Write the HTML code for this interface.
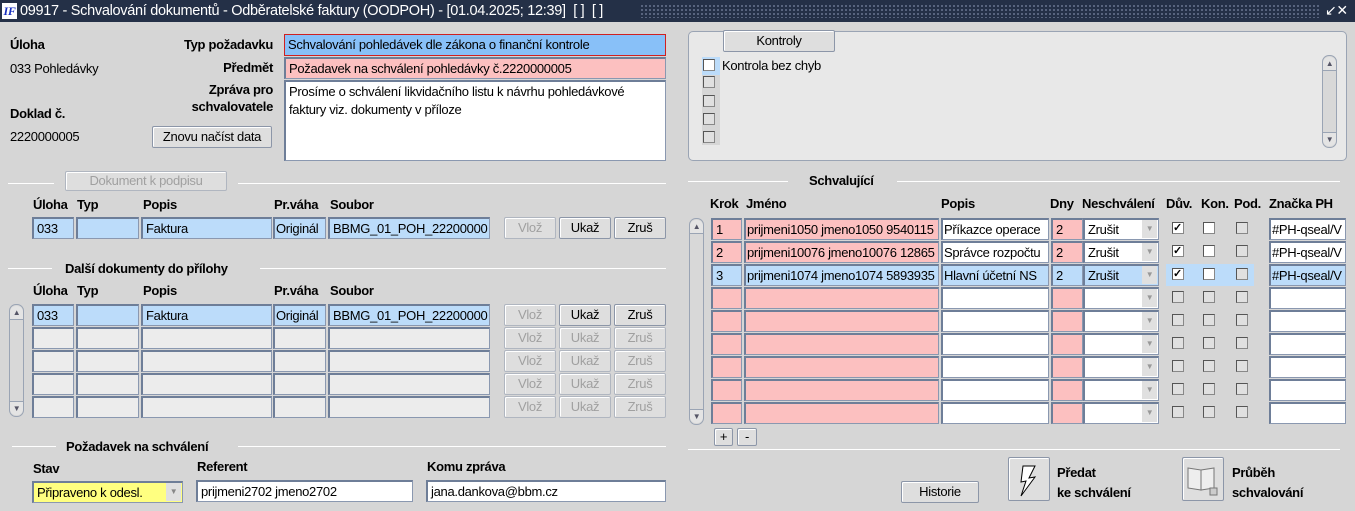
<!DOCTYPE html>
<html><head><meta charset="utf-8"><style>
*{box-sizing:border-box;margin:0;padding:0}
body{width:1355px;height:511px;background:#d6d6d6;font-family:"Liberation Sans",sans-serif;font-size:13px;color:#000;position:relative;overflow:hidden;letter-spacing:-0.3px}
.a{position:absolute;white-space:nowrap}
.b{font-weight:bold}
.f{position:absolute;border:1px solid #8a98b0;border-top:2px solid #6e7e98;border-left:2px solid #6e7e98;padding:1px 3px;line-height:17px;white-space:nowrap;overflow:hidden;height:22px}
.bl{background:#bcdcfa}.pk{background:#fcc0c0}.wh{background:#fff}.gr{background:#ececec}
.btn{position:absolute;border:1px solid #8c96a8;background:#dedede;text-align:center;line-height:19px;height:22px;border-radius:2px;box-shadow:inset 1px 1px 0 #fff}
.dis{color:#a0a0a0;border-color:#b0b6c0}
.hl{position:absolute;height:1px;background:#888;border-bottom:1px solid #fff}
.cb{position:absolute;width:12px;height:12px;border:1px solid #888;border-top-color:#555;border-left-color:#555;background:#e0e0e0}
.sb{position:absolute;width:15px;border:1px solid #9aa4b4;border-radius:7px;background:#d8d8d8;font-size:8px;color:#556;text-align:center}
.sb .u{position:absolute;top:1px;left:0;width:13px;height:14px;border-bottom:1px solid #9aa4b4;background:#e4e4e4;border-radius:6px 6px 0 0;line-height:14px}
.sb .d{position:absolute;bottom:1px;left:0;width:13px;height:14px;border-top:1px solid #9aa4b4;background:#e4e4e4;border-radius:0 0 6px 6px;line-height:14px}
</style></head><body>
<div class="a" style="left:0;top:0;width:1355px;height:22px;background:#243047;color:#fff;font-size:14.5px;line-height:22px;padding-left:20px">09917 - Schvalování dokumentů - Odběratelské faktury (OODPOH) - [01.04.2025; 12:39]&nbsp; [ ]&nbsp; [ ]</div>
<div class="a" style="left:2px;top:3px;width:15px;height:16px;background:#fff;color:#1830c0;font:bold italic 12px 'Liberation Serif';line-height:16px;text-align:center">IF</div>
<div class="a" style="left:640px;top:4px;width:680px;height:14px;background-image:radial-gradient(#6a7690 0.8px,transparent 1px);background-size:4px 4px"></div>
<div class="a" style="left:1325px;top:2px;color:#fff;font-size:14px">↙✕</div>

<div class="a b" style="left:10px;top:37px">Úloha</div>
<div class="a" style="left:10px;top:61px">033 Pohledávky</div>
<div class="a b" style="left:10px;top:106px">Doklad č.</div>
<div class="a" style="left:10px;top:129px">2220000005</div>
<div class="a b" style="left:120px;top:37px;width:153px;text-align:right">Typ požadavku</div>
<div class="a b" style="left:120px;top:60px;width:153px;text-align:right">Předmět</div>
<div class="a b" style="left:120px;top:81px;width:153px;text-align:right;line-height:17px">Zpráva pro<br>schvalovatele</div>
<div class="f" style="left:284px;top:34px;width:382px;background:#88c0f8;border:1px solid #d02020">Schvalování pohledávek dle zákona o finanční kontrole</div>
<div class="f pk" style="left:284px;top:57px;width:382px">Požadavek na schválení pohledávky č.2220000005</div>
<div class="f wh" style="left:284px;top:80px;width:382px;height:81px;white-space:normal;line-height:18px">Prosíme o schválení likvidačního listu k návrhu pohledávkové faktury viz. dokumenty v příloze</div>
<div class="btn" style="left:152px;top:126px;width:120px">Znovu načíst data</div>

<div class="hl" style="left:8px;top:183px;width:46px"></div>
<div class="btn dis" style="left:65px;top:171px;width:162px;height:20px;line-height:17px">Dokument k podpisu</div>
<div class="hl" style="left:238px;top:183px;width:428px"></div>
<div class="a b" style="left:33px;top:197px">Úloha</div><div class="a b" style="left:77px;top:197px">Typ</div><div class="a b" style="left:143px;top:197px">Popis</div><div class="a b" style="left:274px;top:197px">Pr.váha</div><div class="a b" style="left:330px;top:197px">Soubor</div>
<div class="f bl" style="left:32px;top:217px;width:42px">033</div><div class="f bl" style="left:76px;top:217px;width:63px"></div><div class="f bl" style="left:141px;top:217px;width:131px">Faktura</div><div class="f bl" style="left:273px;top:217px;width:53px;padding:1px 1px">Originál</div><div class="f bl" style="left:328px;top:217px;width:162px">BBMG_01_POH_22200000</div>
<div class="btn dis" style="left:504px;top:217px;width:52px">Vlož</div><div class="btn" style="left:559px;top:217px;width:52px">Ukaž</div><div class="btn" style="left:614px;top:217px;width:52px">Zruš</div>

<div class="hl" style="left:8px;top:268px;width:44px"></div>
<div class="a b" style="left:65px;top:261px">Další dokumenty do přílohy</div>
<div class="hl" style="left:260px;top:268px;width:406px"></div>
<div class="a b" style="left:33px;top:283px">Úloha</div><div class="a b" style="left:77px;top:283px">Typ</div><div class="a b" style="left:143px;top:283px">Popis</div><div class="a b" style="left:274px;top:283px">Pr.váha</div><div class="a b" style="left:330px;top:283px">Soubor</div>
<div class="sb" style="left:9px;top:304px;height:113px"><div class="u">▲</div><div class="d">▼</div></div>
<div class="f bl" style="left:32px;top:304px;width:42px">033</div><div class="f bl" style="left:76px;top:304px;width:63px"></div><div class="f bl" style="left:141px;top:304px;width:131px">Faktura</div><div class="f bl" style="left:273px;top:304px;width:53px;padding:1px 1px">Originál</div><div class="f bl" style="left:328px;top:304px;width:162px">BBMG_01_POH_22200000</div>
<div class="btn dis" style="left:504px;top:304px;width:52px">Vlož</div><div class="btn" style="left:559px;top:304px;width:52px">Ukaž</div><div class="btn" style="left:614px;top:304px;width:52px">Zruš</div>
<div id="lr"></div>

<div class="hl" style="left:12px;top:446px;width:44px"></div>
<div class="a b" style="left:66px;top:439px">Požadavek na schválení</div>
<div class="hl" style="left:238px;top:446px;width:428px"></div>
<div class="a b" style="left:33px;top:461px">Stav</div><div class="a b" style="left:197px;top:459px">Referent</div><div class="a b" style="left:427px;top:459px">Komu zpráva</div>
<div class="f" style="left:32px;top:481px;width:151px;background:#ffff80">Připraveno k odesl.</div>
<div class="a" style="left:166px;top:483px;width:15px;height:18px;background:#e0e0e0;color:#888;font-size:8px;text-align:center;line-height:18px">▼</div>
<div class="f wh" style="left:196px;top:480px;width:217px">prijmeni2702 jmeno2702</div>
<div class="f wh" style="left:426px;top:480px;width:240px">jana.dankova@bbm.cz</div>

<div class="a" style="left:688px;top:31px;width:659px;height:130px;background:#e8e8e8;border:1px solid #9aa4b4;border-radius:5px"></div>
<div class="btn" style="left:723px;top:30px;width:112px">Kontroly</div>
<div class="a" style="left:702px;top:57px;width:18px;height:88px;background:#d6d6d6"></div>
<div class="a" style="left:702px;top:57px;width:18px;height:18px;background:#bcdcfa"></div>
<div class="cb" style="left:703px;top:59px;background:#fff"></div>
<div class="cb" style="left:703px;top:76px"></div><div class="cb" style="left:703px;top:95px"></div><div class="cb" style="left:703px;top:113px"></div><div class="cb" style="left:703px;top:131px"></div>
<div class="a" style="left:722px;top:58px">Kontrola bez chyb</div>
<div class="sb" style="left:1322px;top:55px;height:93px"><div class="u">▲</div><div class="d">▼</div></div>

<div class="hl" style="left:688px;top:181px;width:100px"></div>
<div class="a b" style="left:809px;top:173px">Schvalující</div>
<div class="hl" style="left:897px;top:181px;width:443px"></div>
<div class="a b" style="left:710px;top:196px">Krok</div><div class="a b" style="left:746px;top:196px">Jméno</div><div class="a b" style="left:941px;top:196px">Popis</div><div class="a b" style="left:1050px;top:196px">Dny</div><div class="a b" style="left:1082px;top:196px">Neschválení</div><div class="a b" style="left:1166px;top:196px">Dův.</div><div class="a b" style="left:1201px;top:196px">Kon.</div><div class="a b" style="left:1234px;top:196px">Pod.</div><div class="a b" style="left:1269px;top:196px">Značka PH</div>
<div class="sb" style="left:689px;top:218px;height:207px"><div class="u">▲</div><div class="d">▼</div></div>
<div id="rr"></div>

<div class="btn" style="left:714px;top:428px;width:19px;height:18px;line-height:15px">+</div>
<div class="btn" style="left:737px;top:428px;width:20px;height:18px;line-height:15px">-</div>
<div class="hl" style="left:688px;top:449px;width:652px"></div>
<div class="btn" style="left:901px;top:481px;width:78px">Historie</div>
<div class="btn" style="left:1008px;top:457px;width:42px;height:44px"><svg width="40" height="42" viewBox="0 0 40 42"><path d="M14 8 L26 8 L20 20 L26 19 L12 38 L17 23 L12 24 Z" fill="#fff" stroke="#000" stroke-width="1"/></svg></div>
<div class="a b" style="left:1057px;top:463px;line-height:20px">Předat<br>ke schválení</div>
<div class="btn" style="left:1182px;top:457px;width:42px;height:44px"><svg width="40" height="42" viewBox="0 0 40 42"><path d="M5 10 L18 12 L18 32 L5 30 Z M18 12 L31 10 L31 30 L18 32 Z" fill="#eee" stroke="#777"/><rect x="27" y="30" width="7" height="7" fill="#ccc" stroke="#777"/></svg></div>
<div class="a b" style="left:1232px;top:463px;line-height:20px">Průběh<br>schvalování</div>

<script>
var h='';
for(var i=0;i<4;i++){var y=327+i*23;
h+='<div class="f gr" style="left:32px;top:'+y+'px;width:42px"></div><div class="f gr" style="left:76px;top:'+y+'px;width:63px"></div><div class="f gr" style="left:141px;top:'+y+'px;width:131px"></div><div class="f gr" style="left:273px;top:'+y+'px;width:53px"></div><div class="f gr" style="left:328px;top:'+y+'px;width:162px"></div><div class="btn dis" style="left:504px;top:'+y+'px;width:52px">Vlož</div><div class="btn dis" style="left:559px;top:'+y+'px;width:52px">Ukaž</div><div class="btn dis" style="left:614px;top:'+y+'px;width:52px">Zruš</div>';}
document.getElementById('lr').outerHTML=h;
var d=[['1','prijmeni1050 jmeno1050 9540115','Příkazce operace','pk'],['2','prijmeni10076 jmeno10076 12865','Správce rozpočtu','pk'],['3','prijmeni1074 jmeno1074 5893935','Hlavní účetní NS','bl']];
h='';
for(var i=0;i<9;i++){var y=218+i*23,r=d[i],c=r?r[3]:'pk',pc=r&&r[3]=='bl'?'bl':'wh';
h+='<div class="f '+c+'" style="left:711px;top:'+y+'px;width:31px">'+(r?r[0]:'')+'</div>';
h+='<div class="f '+c+'" style="left:744px;top:'+y+'px;width:195px;padding:1px 1px">'+(r?r[1]:'')+'</div>';
h+='<div class="f '+pc+'" style="left:941px;top:'+y+'px;width:108px;padding:1px 1px">'+(r?r[2]:'')+'</div>';
h+='<div class="f '+c+'" style="left:1051px;top:'+y+'px;width:32px">'+(r?'2':'')+'</div>';
h+='<div class="f '+(r&&r[3]=='bl'?'bl':'wh')+'" style="left:1083px;top:'+y+'px;width:76px">'+(r?'Zrušit':'')+'</div><div class="a" style="left:1142px;top:'+(y+2)+'px;width:15px;height:18px;background:#e0e0e0;color:#999;font-size:8px;text-align:center;line-height:18px">▼</div>';
if(r&&r[3]=='bl')h+='<div class="a" style="left:1166px;top:'+y+'px;width:88px;height:22px;background:#bcdcfa"></div>';
h+='<div class="cb" style="left:1172px;top:'+(y+4)+'px;'+(r?'background:#fff;font-size:11px;line-height:10px;font-weight:bold">✓':'">')+'</div>';
h+='<div class="cb" style="left:1203px;top:'+(y+4)+'px;'+(r?'background:#fff':'')+'"></div>';
h+='<div class="cb" style="left:1236px;top:'+(y+4)+'px"></div>';
h+='<div class="f '+(r&&r[3]=='bl'?'bl':'wh')+'" style="left:1269px;top:'+y+'px;width:77px;padding:1px 1px">'+(r?'#PH-qseal/V':'')+'</div>';}
document.getElementById('rr').outerHTML=h;
</script>
</body></html>
